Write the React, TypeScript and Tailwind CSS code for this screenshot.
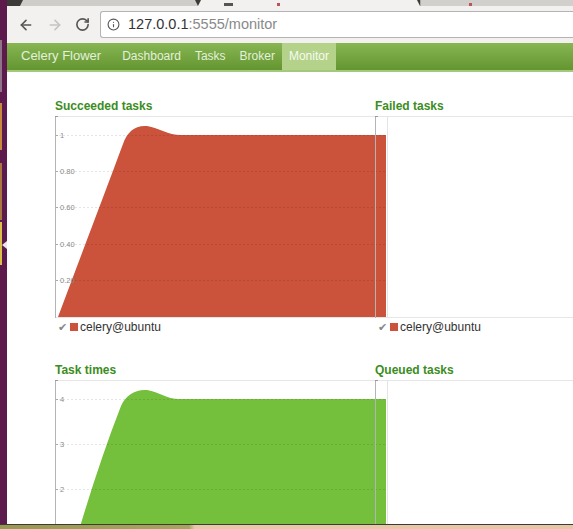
import React from 'react';
import { ArrowLeft, ArrowRight, RotateCw, Info } from 'lucide-react';

const RED = '#cb533b';
const GREEN = '#74bf3b';

type Tick = { label: string; y: number };

const redTicks: Tick[] = [
  { label: '1', y: 19 },
  { label: '0.80', y: 55 },
  { label: '0.60', y: 91 },
  { label: '0.40', y: 128 },
  { label: '0.20', y: 164 },
];

// the "1" line sits below the fold
const greenTicks: Tick[] = [
  { label: '4', y: 19 },
  { label: '3', y: 64 },
  { label: '2', y: 109 },
];

const redArea =
  'M3 201 C22 150, 48 82, 68 28 C72 16, 80 9, 92 10 C104 12, 113 19, 126 19 L331 19 L331 201 Z';
const greenArea =
  'M9 202 C25 145, 44 82, 66 26 C71 14, 82 9, 92 10 C104 12, 112 19, 124 19 L331 19 L331 202 Z';

function Chart({
  width,
  area,
  color,
  ticks = [],
  guide,
}: {
  width: number;
  area?: string;
  color?: string;
  ticks?: Tick[];
  guide?: boolean;
}) {
  return (
    <svg width={width} height={202} className="block overflow-visible">
      <line x1={0} y1={0.5} x2={width} y2={0.5} stroke="#e6e6e6" />
      <line x1={0} y1={201.5} x2={width} y2={201.5} stroke="#e6e6e6" />
      {area && <path d={area} fill={color} />}
      {ticks.map((t) => (
        <g key={t.label}>
          <line x1={0} y1={t.y + 0.5} x2={width} y2={t.y + 0.5} stroke="rgba(0,0,0,0.1)" strokeDasharray="2 2" />
          <line x1={0} y1={t.y + 0.5} x2={3} y2={t.y + 0.5} stroke="#aaa" />
          <text x={5} y={t.y + 3} fontSize={7.5} fill="#8a8a8a" fontFamily="'Liberation Sans', Arial, sans-serif">
            {t.label}
          </text>
        </g>
      ))}
      {guide && <line x1={12.5} y1={0} x2={12.5} y2={202} stroke="#e4e4e4" />}
      <line x1={0.5} y1={0} x2={0.5} y2={202} stroke="#b4b4b4" />
      <line x1={0} y1={0.5} x2={3} y2={0.5} stroke="#999" />
    </svg>
  );
}

function Legend() {
  return (
    <div className="h-[18px] flex items-center pl-[3px] text-[12px] text-[#333]">
      <span className="w-[12px] text-[11px] leading-none text-[#888] font-['DejaVu_Sans',sans-serif]">✔</span>
      <span className="w-[8px] h-[8px] mr-[2px]" style={{ background: RED }} />
      <span>celery@ubuntu</span>
    </div>
  );
}

function Title({ children }: { children: React.ReactNode }) {
  return <div className="h-[18px] leading-[16px] text-[12px] font-bold text-[#3b8d22]">{children}</div>;
}

export default function App() {
  return (
    <div className="w-[573px] h-[529px] overflow-hidden flex flex-col bg-white font-['Liberation_Sans',Arial,sans-serif]">
      <div className="h-[524px] flex">
        {/* launcher edge */}
        <div className="relative w-[7px] bg-[#5d1a4d] flex flex-col">
          <div className="h-[40px]" />
          <div className="h-[52px] w-[2px] bg-[#8f7388]" />
          <div className="h-[11px]" />
          <div className="h-[47px] w-[2px] bg-[#c58a3d]" />
          <div className="h-[13px]" />
          <div className="h-[57px] w-[2px] bg-[#a8773f]" />
          <div className="h-[2px]" />
          <div className="h-[43px] w-[2px] bg-[#d8c04a]" />
          <div className="absolute left-[2px] top-[241px] w-0 h-0 border-y-[4px] border-y-transparent border-r-[5px] border-r-[#e8e8e8]" />
        </div>

        <div className="flex-1 flex flex-col min-w-0">
          {/* tab strip */}
          <div className="h-[6px] flex bg-[#3c3b37]">
            <div className="ml-[13px] w-[178px] bg-[#cfcdca] [clip-path:polygon(3px_0,calc(100%-3px)_0,100%_100%,0_100%)]" />
            <div className="w-[222px] bg-[#f2f1f0] [clip-path:polygon(3px_0,calc(100%-3px)_0,100%_100%,0_100%)] flex items-end">
              <div className="ml-[26px] w-[9px] h-[3px] bg-[#555]" />
              <div className="ml-[44px] w-[3px] h-[3px] bg-[#b55]" />
            </div>
            <div className="flex-1 bg-[#d1d0cc] border-l border-[#aaa] flex items-end">
              <div className="ml-[48px] w-[3px] h-[3px] bg-[#b55]" />
            </div>
          </div>

          {/* toolbar */}
          <div className="h-[37px] bg-[#f2f1f0] flex items-center pl-[11px]">
            <ArrowLeft size={16} strokeWidth={2.4} className="text-[#555]" />
            <ArrowRight size={16} strokeWidth={2.4} className="ml-[13px] text-[#c4c4c4]" />
            <RotateCw size={15} strokeWidth={2.6} className="ml-[12px] text-[#555]" />
            <div className="ml-[10px] flex-1 h-[27px] bg-white border border-r-0 border-[#b4b4b4] rounded-l-[3px] flex items-center pl-[6px]">
              <Info size={13} strokeWidth={2} className="text-[#555]" />
              <span className="ml-[8px] text-[14.5px] text-[#333]">
                127.0.0.1<span className="text-[#8a8a8a]">:5555/monitor</span>
              </span>
            </div>
          </div>

          {/* navbar */}
          <div className="h-[29px] flex items-stretch pl-[14px] bg-[linear-gradient(#87b653,#639530)] border-b-2 border-[#a4c97c] text-[#e4f0dc]">
            <span className="text-[13px] flex items-center pb-[2px]">Celery Flower</span>
            <div className="ml-[14px] flex text-[12px]">
              <span className="px-[7px] flex items-center pb-[2px]">Dashboard</span>
              <span className="px-[7px] flex items-center pb-[2px]">Tasks</span>
              <span className="px-[7px] flex items-center pb-[2px]">Broker</span>
              <span className="px-[7px] flex items-center pb-[2px] bg-[#b4d28a] text-[#f6fbf0]">Monitor</span>
            </div>
          </div>

          {/* content */}
          <div className="flex-1 overflow-hidden pt-[26px] pl-[48px]">
            <div className="grid grid-cols-[320px_320px]">
              <div className="mb-[26px]">
                <Title>Succeeded tasks</Title>
                <Chart width={331} area={redArea} color={RED} ticks={redTicks} />
                <Legend />
              </div>
              <div className="mb-[26px]">
                <Title>Failed tasks</Title>
                <Chart width={320} guide />
                <Legend />
              </div>
              <div>
                <Title>Task times</Title>
                <Chart width={331} area={greenArea} color={GREEN} ticks={greenTicks} />
              </div>
              <div>
                <Title>Queued tasks</Title>
                <Chart width={320} guide />
              </div>
            </div>
          </div>
        </div>
      </div>
      <div className="h-[1px] bg-[#3c3b37]" />
      <div className="flex-1 bg-[linear-gradient(90deg,#9a9850_0%,#a8a460_33%,#e8c8a8_34%,#e6c6a4_100%)]" />
    </div>
  );
}
